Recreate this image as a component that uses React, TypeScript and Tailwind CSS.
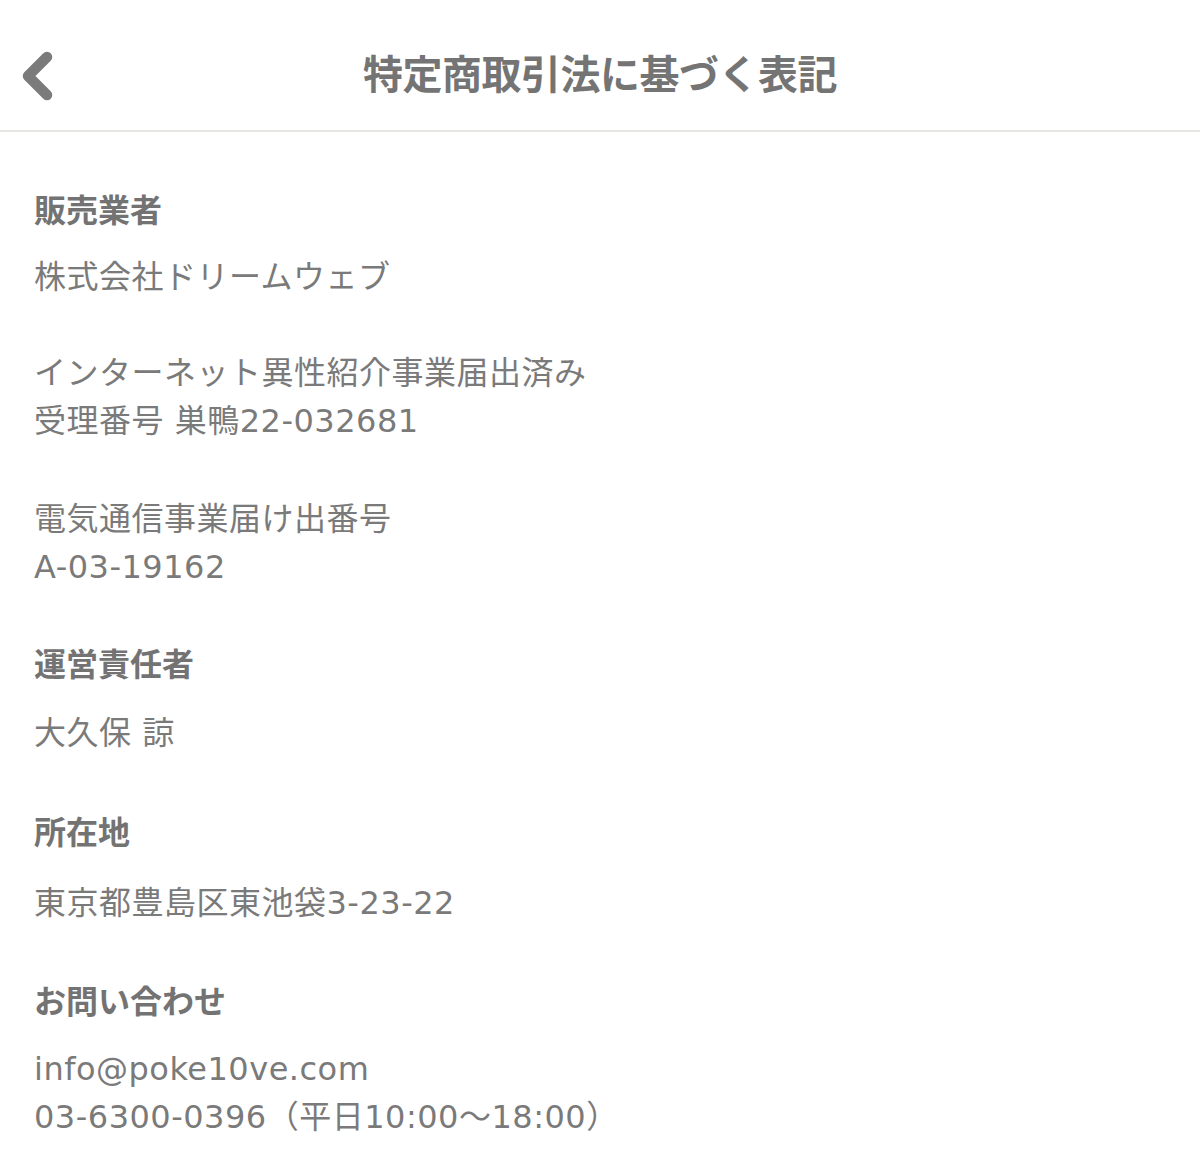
const font = {
  fontFamily: '"DejaVu Sans", "Noto Sans CJK JP", sans-serif',
};

interface Section {
  label?: string;
  lines: string[];
  mt: string;
  gap: string;
}

const sections: Section[] = [
  { label: "販売業者", lines: ["株式会社ドリームウェブ"], mt: "mt-0", gap: "mb-[18px]" },
  {
    lines: ["インターネット異性紹介事業届出済み", "受理番号 巣鴨22-032681"],
    mt: "mt-[48px]",
    gap: "",
  },
  { lines: ["電気通信事業届け出番号", "A-03-19162"], mt: "mt-[50px]", gap: "" },
  { label: "運営責任者", lines: ["大久保 諒"], mt: "mt-[50px]", gap: "mb-[20px]" },
  { label: "所在地", lines: ["東京都豊島区東池袋3-23-22"], mt: "mt-[52px]", gap: "mb-[22px]" },
  {
    label: "お問い合わせ",
    lines: ["info@poke10ve.com", "03-6300-0396（平日10:00〜18:00）"],
    mt: "mt-[51px]",
    gap: "mb-[19px]",
  },
];

const BackIcon = () => (
  <svg width="40" height="60" viewBox="0 0 40 60" fill="none">
    <path
      d="M27 7 L8 26 L27 45"
      stroke="#7b7b7b"
      strokeWidth="10.5"
      strokeLinecap="round"
      strokeLinejoin="round"
    />
  </svg>
);

export default function App() {
  return (
    <div className="w-[1200px] h-[1172px] bg-white overflow-hidden" style={font}>
      <header className="relative h-[132px] pt-[20px] border-b-2 border-[#e8e6e3] flex items-center justify-center">
        <button className="absolute left-[20px] top-[50px]">
          <BackIcon />
        </button>
        <h1 className="text-[40px] leading-[50px] font-bold text-[#747474] tracking-[-0.5px]">
          特定商取引法に基づく表記
        </h1>
      </header>

      <main className="px-[34px] pt-[55px] flex flex-col">
        {sections.map((s, i) => (
          <section key={i} className={s.mt}>
            {s.label && (
              <h2 className={`text-[32px] leading-[48px] font-bold text-[#737373] ${s.gap}`}>
                {s.label}
              </h2>
            )}
            {s.lines.map((line) => (
              <p key={line} className="text-[32px] leading-[48px] tracking-[0.5px] text-[#7a7a7a]">
                {line}
              </p>
            ))}
          </section>
        ))}
      </main>
    </div>
  );
}
